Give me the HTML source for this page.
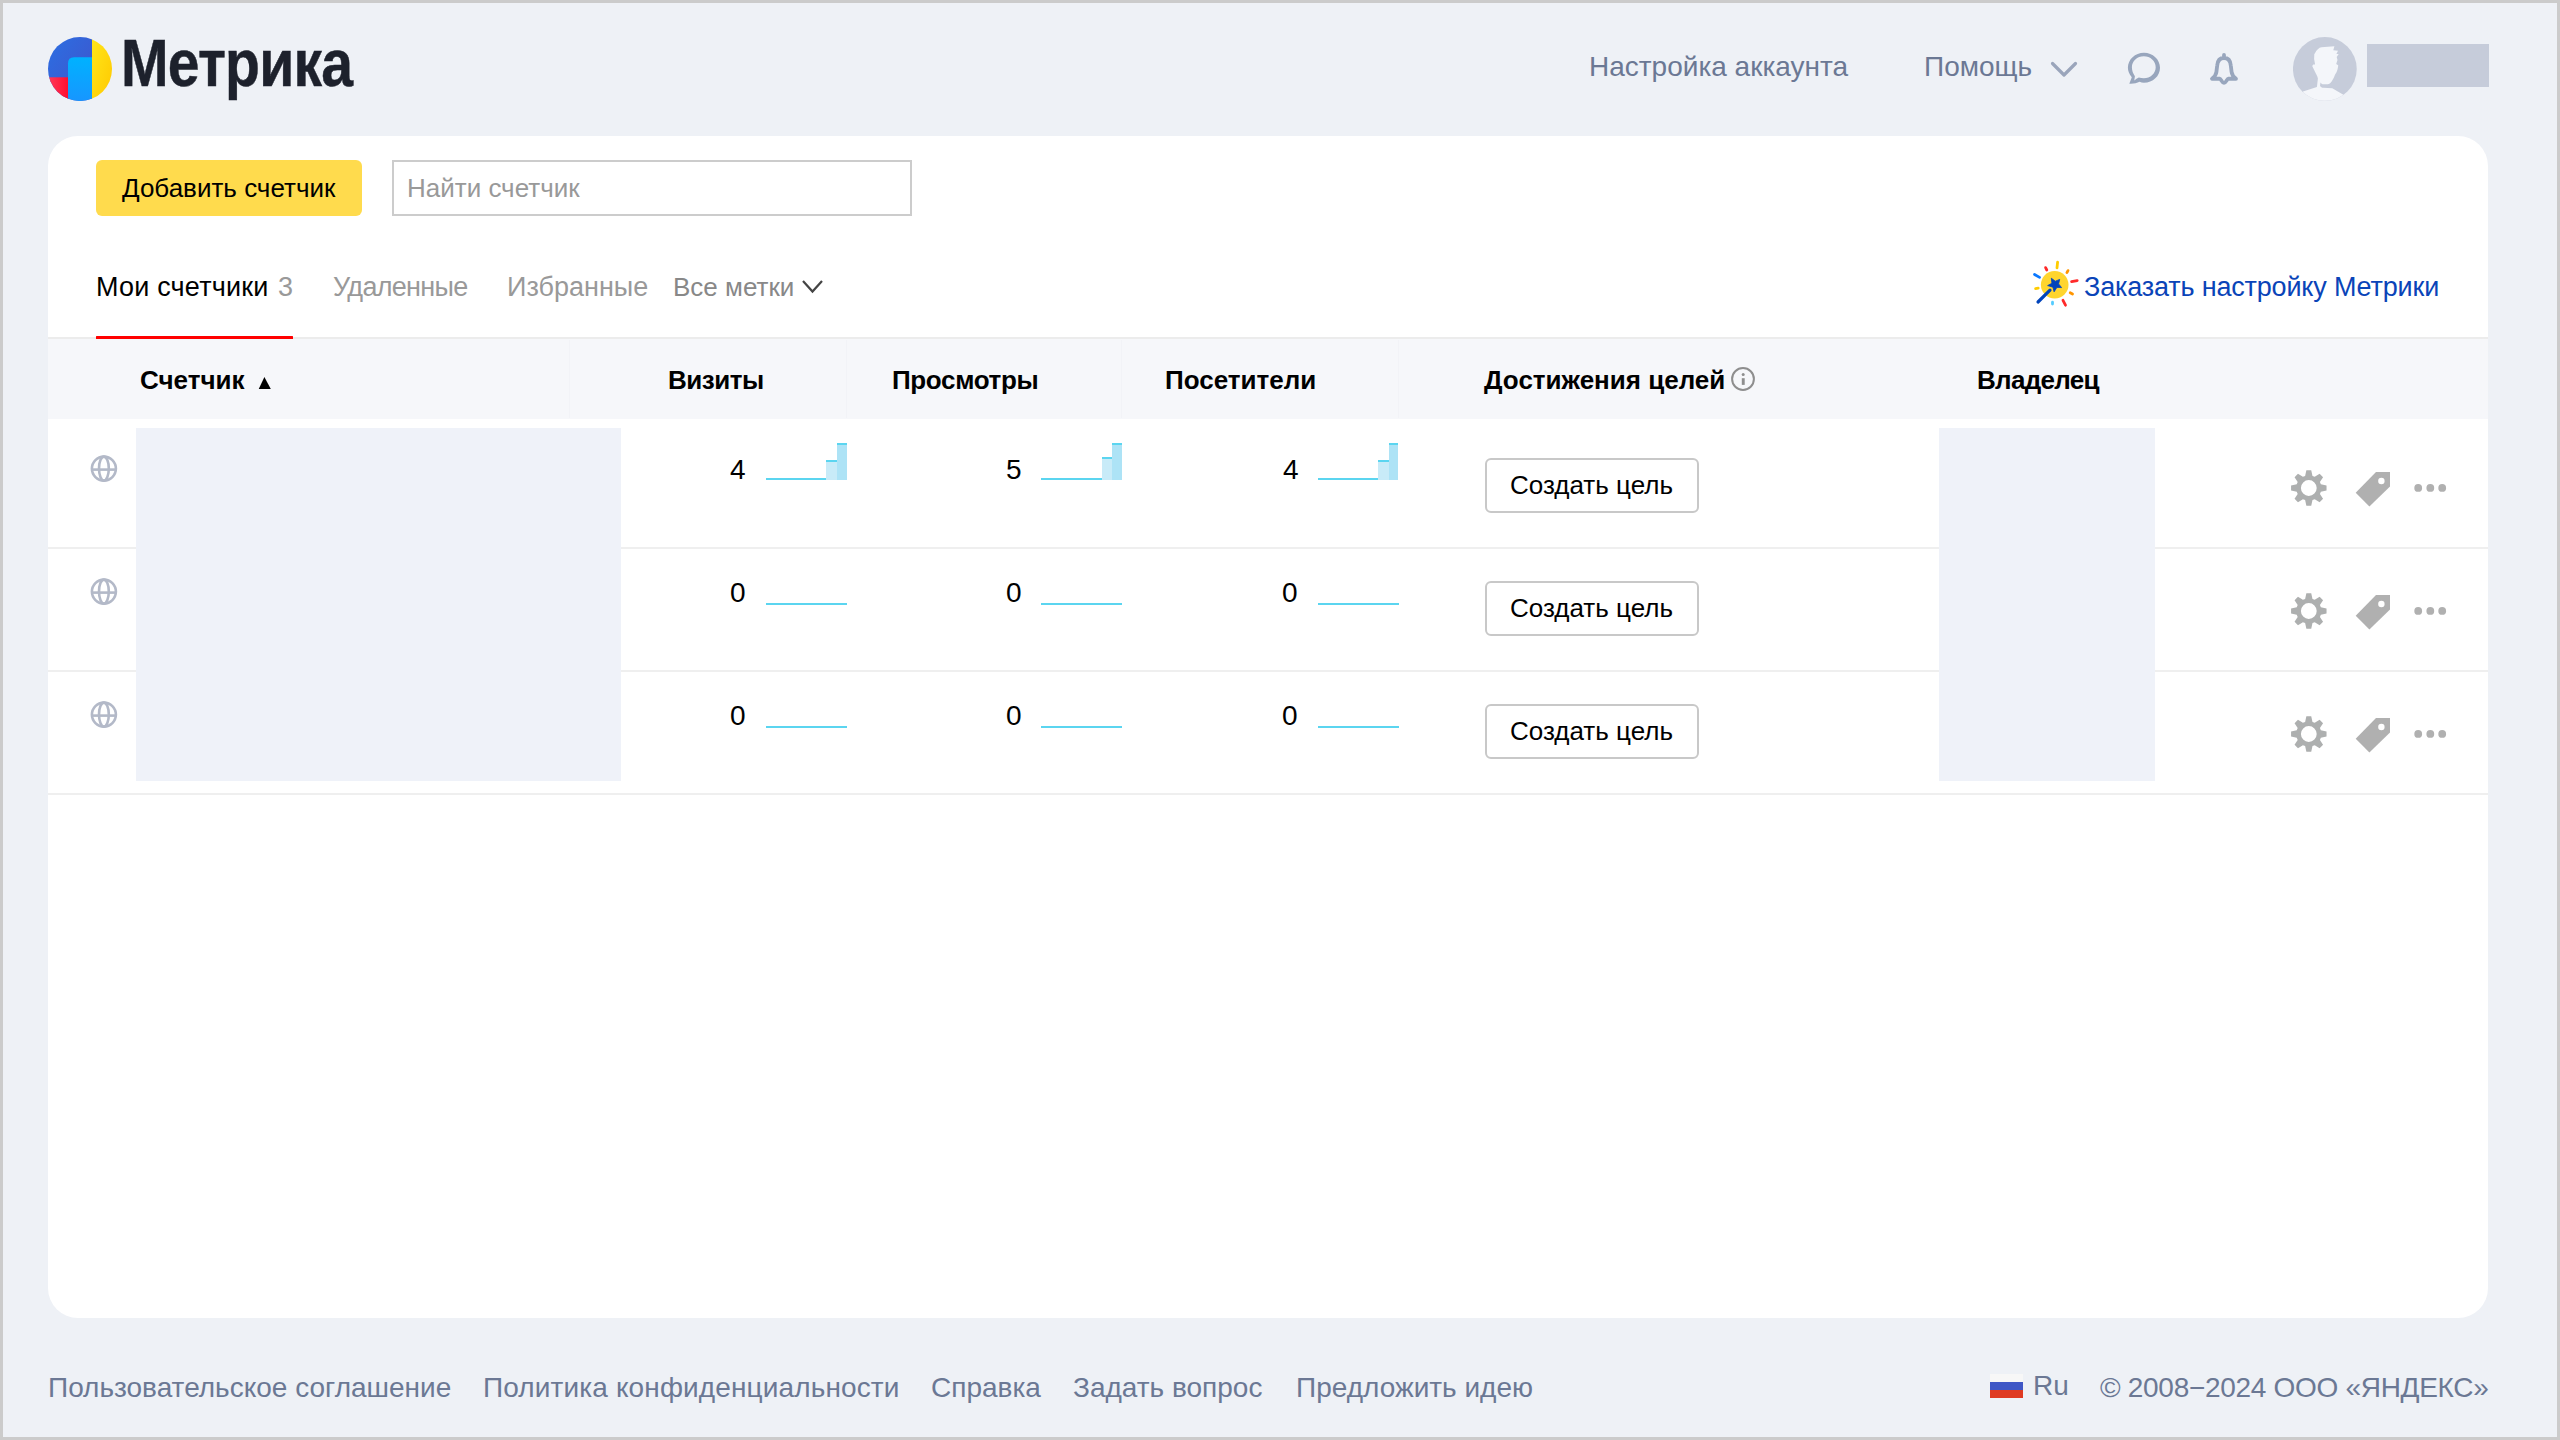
<!DOCTYPE html>
<html><head><meta charset="utf-8">
<style>
html,body{margin:0;padding:0;}
body{width:2560px;height:1440px;overflow:hidden;position:relative;background:#c9c9c9;font-family:"Liberation Sans",sans-serif;}
#page{position:absolute;left:0;top:0;width:2560px;height:1440px;background:#eef1f6;overflow:hidden;}
.bd{position:absolute;background:#cbcbcb;z-index:10;}
.a{position:absolute;}
.t{position:absolute;white-space:nowrap;line-height:1;}
#card{position:absolute;left:48px;top:136px;width:2440px;height:1182px;background:#fff;border-radius:30px;}
</style></head>
<body>
<div id="page">
  <!-- logo -->
  <svg class="a" style="left:48px;top:36.7px" width="64" height="64" viewBox="0 0 64 64">
    <defs>
      <clipPath id="lc"><circle cx="32" cy="32" r="32"/></clipPath>
      <linearGradient id="gb" x1="0" y1="0" x2="1" y2="1"><stop offset="0" stop-color="#2b6fe3"/><stop offset="1" stop-color="#4152c9"/></linearGradient>
      <linearGradient id="gy" x1="0" y1="0" x2="1" y2="1"><stop offset="0" stop-color="#ffe61a"/><stop offset="1" stop-color="#ffc800"/></linearGradient>
      <linearGradient id="gr" x1="0" y1="0" x2="1" y2="0"><stop offset="0" stop-color="#ff3a5c"/><stop offset="1" stop-color="#ff0a2a"/></linearGradient>
      <linearGradient id="gc" x1="0" y1="0" x2="0" y2="1"><stop offset="0" stop-color="#00b2ff"/><stop offset="1" stop-color="#1796ff"/></linearGradient>
    </defs>
    <g clip-path="url(#lc)">
      <rect x="0" y="0" width="44" height="64" fill="url(#gb)"/>
      <rect x="0" y="40.3" width="22" height="24" fill="url(#gr)"/>
      <rect x="44" y="0" width="20" height="64" fill="url(#gy)"/>
      <path d="M20 26.3 Q20 20.3 26 20.3 L44 20.3 L44 64 L20 64 Z" fill="url(#gc)"/>
    </g>
  </svg>
  <div class="t" id="logo" style="left:121px;top:29px;font-size:67px;font-weight:bold;color:#1d212c;letter-spacing:-1px;-webkit-text-stroke:0.5px #1d212c;transform:scaleX(0.853);transform-origin:0 0;">Метрика</div>

  <div class="t" id="nav1" style="left:1589px;top:53px;font-size:28px;color:#6b7894;">Настройка аккаунта</div>
  <div class="t" id="nav2" style="left:1924px;top:53px;font-size:28px;color:#6b7894;">Помощь</div>
  <svg class="a" style="left:2045px;top:56px" width="34" height="24" viewBox="0 0 34 24"><path d="M7.5 7.5 L19 19 L30.5 7.5" fill="none" stroke="#9aa5bb" stroke-width="3.2" stroke-linecap="round" stroke-linejoin="round"/></svg>
  <!-- chat -->
  <svg class="a" style="left:2124px;top:48px" width="40" height="40" viewBox="0 0 40 40">
    <path fill="#98a6bd" fill-rule="evenodd" d="M5.3 35.7 L7.8 29.2 C5 26 3.9 22.5 3.9 19.7 C3.9 11.42 11.09 4.7 19.95 4.7 C28.81 4.7 36 11.42 36 19.7 C36 27.98 28.81 34.7 19.95 34.7 C18.4 34.7 16.9 34.4 15.6 33.8 C12.8 35.3 9.5 35.9 5.3 35.7 Z M10.3 32.5 L10.9 28.2 C9 25.5 7.9 22.5 7.9 19.3 C7.9 13.2 13.2 8.3 19.8 8.3 C26.4 8.3 31.7 13.2 31.7 19.3 C31.7 25.4 26.4 30.3 19.8 30.3 C18 30.3 16.3 30.1 14.8 29.6 C13.2 30.3 11.8 31.3 10.3 32.5 Z"/>
  </svg>
  <!-- bell -->
  <svg class="a" style="left:2204px;top:48px" width="40" height="40" viewBox="0 0 40 40">
    <path d="M20 6.9 L20 8.6 M20 10 C15.5 10 13.5 13.5 13.2 17.5 L12.4 24 C12.1 26.8 10.8 28.6 8 30.75 L15.8 30.75 C17 30.75 18 34.8 20 34.8 C22 34.8 23 30.75 24.2 30.75 L32 30.75 C29.2 28.6 27.9 26.8 27.6 24 L26.8 17.5 C26.5 13.5 24.5 10 20 10 Z" fill="none" stroke="#98a6bd" stroke-width="3.8" stroke-linejoin="round" stroke-linecap="round"/>
  </svg>
  <!-- avatar -->
  <svg class="a" style="left:2292.9px;top:36.7px" width="64" height="64" viewBox="0 0 64 64">
    <defs><clipPath id="ac"><circle cx="31.85" cy="31.95" r="31.9"/></clipPath></defs>
    <circle cx="31.85" cy="31.95" r="31.9" fill="#c6ccda"/>
    <g clip-path="url(#ac)">
    <path fill="#f4f6fa" d="M21.8 16.4 C23.5 13 26 10.5 28.5 10.2 L41.4 9.2 L40.3 13.3 L45 13.8 L43.4 16.9 L45.7 16.9 L43.7 19.9 L44.5 23 L43.2 27.1 L45.2 28.2 C45 32 43.5 36 42.1 37.4 C40.5 42 37.5 47.2 34.7 47.2 L30.6 47.2 C29 47.2 28 46.2 27.5 45.4 L27 48.7 C27.8 50 29 50.8 30.1 50.8 L39.3 51.3 L50.4 57.7 L60 70 L0 70 L10 54.4 L23.9 50 L24.9 41.5 C24.5 39.5 23.5 37.5 23.1 36.9 L19.3 29.2 C19.5 28 20.2 27.4 20.8 27.4 L22.1 27.4 L21.1 22 L21.3 16.9 Z"/>
    </g>
  </svg>
  <div class="a" style="left:2367px;top:44px;width:122px;height:43px;background:#c6ccda;"></div>

  <div id="card"></div>
  <!-- toolbar -->
  <div class="a" style="left:96px;top:160px;width:266px;height:56px;background:#ffdb4d;border-radius:6px;"></div>
  <div class="t" id="btn1" style="left:122px;top:175px;font-size:26px;color:#000;">Добавить счетчик</div>
  <div class="a" style="left:392px;top:160px;width:516px;height:52px;border:2px solid #cccccc;background:#fff;"></div>
  <div class="t" id="inp" style="left:407px;top:175px;font-size:26px;color:#999;">Найти счетчик</div>
  <!-- tabs -->
  <div class="t" id="tab1" style="left:96px;top:274px;font-size:27px;letter-spacing:0.2px;color:#000;">Мои счетчики</div>
  <div class="t" id="tab1n" style="left:278px;top:274px;font-size:27px;color:#999;">3</div>
  <div class="t" id="tab2" style="left:333px;top:274px;font-size:27px;letter-spacing:-0.7px;color:#999;">Удаленные</div>
  <div class="t" id="tab3" style="left:507px;top:274px;font-size:27px;color:#999;">Избранные</div>
  <div class="t" id="tab4" style="left:673px;top:274px;font-size:26px;color:#888;">Все метки</div>
  <svg class="a" style="left:798px;top:276px" width="30" height="22" viewBox="0 0 30 22"><path d="M5 5 L14.5 15.5 L24 5" fill="none" stroke="#444" stroke-width="2.2"/></svg>
  <div class="a" style="left:96px;top:336px;width:197px;height:3px;background:#ff0000;border-radius:0.6px;z-index:2;"></div>
  <div class="a" style="left:48px;top:337px;width:2440px;height:2px;background:#ececec;"></div>
  <!-- magic icon -->
  <svg class="a" style="left:2028px;top:258px" width="56" height="56" viewBox="0 0 56 56">
    <circle cx="26.7" cy="26.8" r="13.8" fill="#ffd52e"/>
    <g stroke-linecap="round" stroke-width="2.8" fill="none">
      <path d="M29.6 4.2 L29 9.8" stroke="#ffcc00"/>
      <path d="M17.6 9.6 L18.8 12" stroke="#ff2a2a"/>
      <path d="M40 12.6 L38.9 14.6" stroke="#ff9500"/>
      <path d="M6.5 16.5 L11.6 19.4" stroke="#0a78ff"/>
      <path d="M43.6 23.6 L49.2 22.6" stroke="#ff2a2a"/>
      <path d="M7.6 30.6 L10.2 30.2" stroke="#ffcc00"/>
      <path d="M42.2 34.8 L44.5 36" stroke="#ff9500"/>
      <path d="M24.5 44.2 L24.5 46.1" stroke="#55ccff"/>
      <path d="M35 42.3 L37.5 47.2" stroke="#ff2a2a"/>
      <path d="M10 44 L22 32.2" stroke="#0044bb" stroke-width="3.2"/>
    </g>
    <path d="M23.3 20.2 L27.3 23.2 L31.7 21.4 L30.6 25.9 L33.6 29.6 L28.9 29.4 L26.1 33.8 L24.9 29.2 L19.6 27.6 L23.9 25.3 Z" fill="#0044bb" stroke="#0044bb" stroke-width="0.8" stroke-linejoin="round"/>
  </svg>
  <div class="t" id="order" style="left:2084px;top:274px;font-size:27px;letter-spacing:-0.17px;color:#0a44b8;">Заказать настройку Метрики</div>
  <!-- table header -->
  <div class="a" style="left:48px;top:339px;width:2440px;height:80px;background:#f6f7fa;"></div>
  <div class="a" style="left:569px;top:340px;width:1px;height:78px;background:#f2f3f7;"></div>
  <div class="a" style="left:846px;top:340px;width:1px;height:78px;background:#f2f3f7;"></div>
  <div class="a" style="left:1121px;top:340px;width:1px;height:78px;background:#f2f3f7;"></div>
  <div class="a" style="left:1398px;top:340px;width:1px;height:78px;background:#f2f3f7;"></div>
  <div class="t" id="h1" style="left:140px;top:367px;font-size:26px;font-weight:bold;color:#000;">Счетчик</div>
  <svg class="a" style="left:258px;top:376px" width="14" height="14" viewBox="0 0 14 14"><path d="M0.75 12.9 L6.4 0.9 L12.8 12.9 Z" fill="#000"/></svg>
  <div class="t" id="h2" style="left:668px;top:367px;font-size:26px;letter-spacing:-0.5px;font-weight:bold;color:#000;">Визиты</div>
  <div class="t" id="h3" style="left:892px;top:367px;font-size:26px;letter-spacing:-0.35px;font-weight:bold;color:#000;">Просмотры</div>
  <div class="t" id="h4" style="left:1165px;top:367px;font-size:26px;font-weight:bold;color:#000;">Посетители</div>
  <div class="t" id="h5" style="left:1484px;top:367px;font-size:26px;font-weight:bold;color:#000;">Достижения целей</div>
  <svg class="a" style="left:1729px;top:365px" width="28" height="28" viewBox="0 0 28 28"><circle cx="14" cy="14" r="10.9" fill="none" stroke="#8e8e8e" stroke-width="2"/><circle cx="14.2" cy="9.6" r="1.5" fill="#8e8e8e"/><rect x="12.8" y="13.2" width="2.9" height="6.7" fill="#8e8e8e"/></svg>
  <div class="t" id="h6" style="left:1977px;top:367px;font-size:26px;letter-spacing:-0.7px;font-weight:bold;color:#000;">Владелец</div>
  <div class="a" style="left:48px;top:547px;width:2440px;height:2px;background:#efefef;"></div>
  <svg class="a" style="left:88px;top:453px" width="32" height="32" viewBox="0 0 32 32"><g fill="none" stroke="#b3b9c8" stroke-width="2.6"><circle cx="15.9" cy="15.6" r="12"/><ellipse cx="15.9" cy="15.6" rx="4.9" ry="12"/><path d="M4 16.6 L27.8 16.6"/></g></svg>
  <div class="t" style="left:730px;top:456px;font-size:28px;color:#000;">4</div>
  <div class="a" style="left:766px;top:478px;width:59.5px;height:2px;background:#5bd5f0;"></div>
  <div class="a" style="left:825.5px;top:460.3px;width:11.3px;height:19.7px;background:#c8ebf8;border-top:2px solid #5bd5f0;box-sizing:border-box;"></div>
  <div class="a" style="left:836.8px;top:443px;width:9.8px;height:37.0px;background:#ade3f6;border-top:2px solid #5bd5f0;box-sizing:border-box;"></div>
  <div class="t" style="left:1006px;top:456px;font-size:28px;color:#000;">5</div>
  <div class="a" style="left:1041.4px;top:478px;width:61.0px;height:2px;background:#5bd5f0;"></div>
  <div class="a" style="left:1102.4px;top:457px;width:9.5px;height:23.0px;background:#c8ebf8;border-top:2px solid #5bd5f0;box-sizing:border-box;"></div>
  <div class="a" style="left:1111.9px;top:442.8px;width:9.8px;height:37.2px;background:#ade3f6;border-top:2px solid #5bd5f0;box-sizing:border-box;"></div>
  <div class="t" style="left:1283px;top:456px;font-size:28px;color:#000;">4</div>
  <div class="a" style="left:1318px;top:478px;width:59.5px;height:2px;background:#5bd5f0;"></div>
  <div class="a" style="left:1377.5px;top:460.3px;width:11.2px;height:19.7px;background:#c8ebf8;border-top:2px solid #5bd5f0;box-sizing:border-box;"></div>
  <div class="a" style="left:1388.7px;top:442.8px;width:9.8px;height:37.2px;background:#ade3f6;border-top:2px solid #5bd5f0;box-sizing:border-box;"></div>
  <div class="a" style="left:1485px;top:458px;width:210px;height:51px;border:2px solid #c8c8c8;border-radius:6px;background:#fff;"></div>
  <div class="t" style="left:1510px;top:472px;font-size:26px;color:#000;">Создать цель</div>
  <svg class="a" style="left:2288px;top:467px" width="42" height="42" viewBox="0 0 42 42"><g transform="translate(20.8 21)" fill="#adafaf"><path fill-rule="evenodd" d="M-3.68 -12.05 L-2.43 -17.73 L2.43 -17.73 L3.68 -12.05 L5.92 -11.13 L10.82 -14.26 L14.26 -10.82 L11.13 -5.92 L12.05 -3.68 L17.73 -2.43 L17.73 2.43 L12.05 3.68 L11.13 5.92 L14.26 10.82 L10.82 14.26 L5.92 11.13 L3.68 12.05 L2.43 17.73 L-2.43 17.73 L-3.68 12.05 L-5.92 11.13 L-10.82 14.26 L-14.26 10.82 L-11.13 5.92 L-12.05 3.68 L-17.73 2.43 L-17.73 -2.43 L-12.05 -3.68 L-11.13 -5.92 L-14.26 -10.82 L-10.82 -14.26 L-5.92 -11.13 Z M7.9 0 A7.9 7.9 0 1 0 -7.9 0 A7.9 7.9 0 1 0 7.9 0 Z"/></g></svg>
  <svg class="a" style="left:2350px;top:467px" width="46" height="44" viewBox="0 0 46 44"><path d="M26 5.1 L40 5.1 L40 19.4 L19.4 39.5 L5.7 25.7 Z" fill="#b0b0b0"/><circle cx="31.4" cy="14" r="3.2" fill="#fff"/></svg>
  <svg class="a" style="left:2410px;top:478px" width="40" height="20" viewBox="0 0 40 20"><g fill="#b0b0b0"><circle cx="8.2" cy="9.9" r="3.9"/><circle cx="20.3" cy="9.9" r="3.9"/><circle cx="32.2" cy="9.9" r="3.9"/></g></svg>
  <div class="a" style="left:48px;top:670px;width:2440px;height:2px;background:#efefef;"></div>
  <svg class="a" style="left:88px;top:576px" width="32" height="32" viewBox="0 0 32 32"><g fill="none" stroke="#b3b9c8" stroke-width="2.6"><circle cx="15.9" cy="15.6" r="12"/><ellipse cx="15.9" cy="15.6" rx="4.9" ry="12"/><path d="M4 16.6 L27.8 16.6"/></g></svg>
  <div class="t" style="left:730px;top:579px;font-size:28px;color:#000;">0</div>
  <div class="a" style="left:766px;top:603px;width:80.5px;height:2px;background:#5bd5f0;"></div>
  <div class="t" style="left:1006px;top:579px;font-size:28px;color:#000;">0</div>
  <div class="a" style="left:1041.4px;top:603px;width:80.5px;height:2px;background:#5bd5f0;"></div>
  <div class="t" style="left:1282px;top:579px;font-size:28px;color:#000;">0</div>
  <div class="a" style="left:1318px;top:603px;width:80.5px;height:2px;background:#5bd5f0;"></div>
  <div class="a" style="left:1485px;top:581px;width:210px;height:51px;border:2px solid #c8c8c8;border-radius:6px;background:#fff;"></div>
  <div class="t" style="left:1510px;top:595px;font-size:26px;color:#000;">Создать цель</div>
  <svg class="a" style="left:2288px;top:590px" width="42" height="42" viewBox="0 0 42 42"><g transform="translate(20.8 21)" fill="#adafaf"><path fill-rule="evenodd" d="M-3.68 -12.05 L-2.43 -17.73 L2.43 -17.73 L3.68 -12.05 L5.92 -11.13 L10.82 -14.26 L14.26 -10.82 L11.13 -5.92 L12.05 -3.68 L17.73 -2.43 L17.73 2.43 L12.05 3.68 L11.13 5.92 L14.26 10.82 L10.82 14.26 L5.92 11.13 L3.68 12.05 L2.43 17.73 L-2.43 17.73 L-3.68 12.05 L-5.92 11.13 L-10.82 14.26 L-14.26 10.82 L-11.13 5.92 L-12.05 3.68 L-17.73 2.43 L-17.73 -2.43 L-12.05 -3.68 L-11.13 -5.92 L-14.26 -10.82 L-10.82 -14.26 L-5.92 -11.13 Z M7.9 0 A7.9 7.9 0 1 0 -7.9 0 A7.9 7.9 0 1 0 7.9 0 Z"/></g></svg>
  <svg class="a" style="left:2350px;top:590px" width="46" height="44" viewBox="0 0 46 44"><path d="M26 5.1 L40 5.1 L40 19.4 L19.4 39.5 L5.7 25.7 Z" fill="#b0b0b0"/><circle cx="31.4" cy="14" r="3.2" fill="#fff"/></svg>
  <svg class="a" style="left:2410px;top:601px" width="40" height="20" viewBox="0 0 40 20"><g fill="#b0b0b0"><circle cx="8.2" cy="9.9" r="3.9"/><circle cx="20.3" cy="9.9" r="3.9"/><circle cx="32.2" cy="9.9" r="3.9"/></g></svg>
  <div class="a" style="left:48px;top:793.4px;width:2440px;height:2px;background:#efefef;"></div>
  <svg class="a" style="left:88px;top:699px" width="32" height="32" viewBox="0 0 32 32"><g fill="none" stroke="#b3b9c8" stroke-width="2.6"><circle cx="15.9" cy="15.6" r="12"/><ellipse cx="15.9" cy="15.6" rx="4.9" ry="12"/><path d="M4 16.6 L27.8 16.6"/></g></svg>
  <div class="t" style="left:730px;top:702px;font-size:28px;color:#000;">0</div>
  <div class="a" style="left:766px;top:726px;width:80.5px;height:2px;background:#5bd5f0;"></div>
  <div class="t" style="left:1006px;top:702px;font-size:28px;color:#000;">0</div>
  <div class="a" style="left:1041.4px;top:726px;width:80.5px;height:2px;background:#5bd5f0;"></div>
  <div class="t" style="left:1282px;top:702px;font-size:28px;color:#000;">0</div>
  <div class="a" style="left:1318px;top:726px;width:80.5px;height:2px;background:#5bd5f0;"></div>
  <div class="a" style="left:1485px;top:704px;width:210px;height:51px;border:2px solid #c8c8c8;border-radius:6px;background:#fff;"></div>
  <div class="t" style="left:1510px;top:718px;font-size:26px;color:#000;">Создать цель</div>
  <svg class="a" style="left:2288px;top:713px" width="42" height="42" viewBox="0 0 42 42"><g transform="translate(20.8 21)" fill="#adafaf"><path fill-rule="evenodd" d="M-3.68 -12.05 L-2.43 -17.73 L2.43 -17.73 L3.68 -12.05 L5.92 -11.13 L10.82 -14.26 L14.26 -10.82 L11.13 -5.92 L12.05 -3.68 L17.73 -2.43 L17.73 2.43 L12.05 3.68 L11.13 5.92 L14.26 10.82 L10.82 14.26 L5.92 11.13 L3.68 12.05 L2.43 17.73 L-2.43 17.73 L-3.68 12.05 L-5.92 11.13 L-10.82 14.26 L-14.26 10.82 L-11.13 5.92 L-12.05 3.68 L-17.73 2.43 L-17.73 -2.43 L-12.05 -3.68 L-11.13 -5.92 L-14.26 -10.82 L-10.82 -14.26 L-5.92 -11.13 Z M7.9 0 A7.9 7.9 0 1 0 -7.9 0 A7.9 7.9 0 1 0 7.9 0 Z"/></g></svg>
  <svg class="a" style="left:2350px;top:713px" width="46" height="44" viewBox="0 0 46 44"><path d="M26 5.1 L40 5.1 L40 19.4 L19.4 39.5 L5.7 25.7 Z" fill="#b0b0b0"/><circle cx="31.4" cy="14" r="3.2" fill="#fff"/></svg>
  <svg class="a" style="left:2410px;top:724px" width="40" height="20" viewBox="0 0 40 20"><g fill="#b0b0b0"><circle cx="8.2" cy="9.9" r="3.9"/><circle cx="20.3" cy="9.9" r="3.9"/><circle cx="32.2" cy="9.9" r="3.9"/></g></svg>
  <div class="a" style="left:136px;top:428px;width:485px;height:353px;background:#eff2f9;"></div>
  <div class="a" style="left:1939px;top:428px;width:216px;height:353px;background:#eff2f9;"></div>



  <!-- footer -->
  <div class="t" id="f1" style="left:48px;top:1374px;font-size:28px;color:#6b7894;">Пользовательское соглашение</div>
  <div class="t" id="f2" style="left:483px;top:1374px;font-size:28px;letter-spacing:0.13px;color:#6b7894;">Политика конфиденциальности</div>
  <div class="t" id="f3" style="left:931px;top:1374px;font-size:28px;color:#6b7894;">Справка</div>
  <div class="t" id="f4" style="left:1073px;top:1374px;font-size:28px;color:#6b7894;">Задать вопрос</div>
  <div class="t" id="f5" style="left:1296px;top:1374px;font-size:28px;color:#6b7894;">Предложить идею</div>
  <div class="a" style="left:1990px;top:1373.7px;width:32.5px;height:8px;background:#f7f7f7;"></div>
  <div class="a" style="left:1990px;top:1381.7px;width:32.5px;height:8px;background:#3f57c6;"></div>
  <div class="a" style="left:1990px;top:1389.7px;width:32.5px;height:8.2px;background:#df3a22;"></div>
  <div class="t" id="f6" style="left:2033px;top:1372px;font-size:28px;color:#6b7894;">Ru</div>
  <div class="t" id="f7" style="left:2100px;top:1374px;font-size:28px;letter-spacing:-0.3px;color:#6b7894;">© 2008−2024 ООО «ЯНДЕКС»</div>
</div>
<div class="bd" style="left:0;top:0;width:2560px;height:3px"></div>
<div class="bd" style="left:0;top:0;width:3px;height:1440px"></div>
<div class="bd" style="left:2557px;top:0;width:3px;height:1440px"></div>
<div class="bd" style="left:0;top:1437px;width:2560px;height:3px"></div>
</body></html>
